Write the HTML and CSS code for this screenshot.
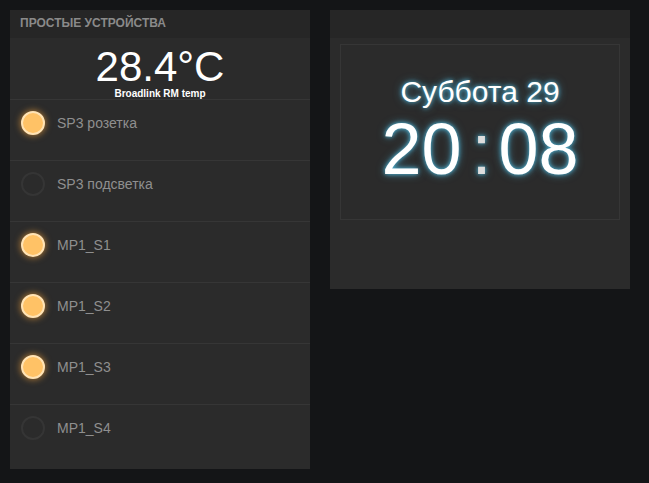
FILE: index.html
```html
<!DOCTYPE html>
<html lang="ru">
<head>
    <meta charset="UTF-8">
    <meta name="viewport" content="width=device-width, initial-scale=1.0">
    <link rel="stylesheet" href="styles.css">
    <title>Dashboard</title>
</head>
<body>
    <div class="board">
        <div class="panel devices">
            <div class="panel-title">Простые устройства</div>
            <div class="temp">
                <div class="temp-value">28.4°C</div>
                <div class="temp-name">Broadlink RM temp</div>
            </div>
            <div class="row"><span class="lamp on"></span><span class="label">SP3 розетка</span></div>
            <div class="row"><span class="lamp"></span><span class="label">SP3 подсветка</span></div>
            <div class="row"><span class="lamp on"></span><span class="label">MP1_S1</span></div>
            <div class="row"><span class="lamp on"></span><span class="label">MP1_S2</span></div>
            <div class="row"><span class="lamp on"></span><span class="label">MP1_S3</span></div>
            <div class="row"><span class="lamp"></span><span class="label">MP1_S4</span></div>
        </div>

        <div class="panel clock-panel">
            <div class="panel-title"></div>
            <div class="clock">
                <div class="day">Суббота 29</div>
                <div class="time"><span>20</span><span class="colon">:</span><span>08</span></div>
            </div>
        </div>
    </div>
</body>
</html>
```

FILE: styles.css
```css
body {
    margin: 0;
    background-color: #141517;
    font-family: "Liberation Sans", Arial, sans-serif;
}
.board {
    display: flex;
    align-items: flex-start;
    gap: 20px;
    padding: 10px;
}
.panel {
    width: 300px;
    background-color: #2b2b2b;
}
.panel-title {
    height: 28px;
    line-height: 27px;
    padding-left: 10px;
    background-color: #262626;
    color: #8a8a8a;
    font-size: 12px;
    font-weight: bold;
    text-transform: uppercase;
}
.devices {
    padding-bottom: 4px;
}
.temp {
    height: 61px;
    text-align: center;
    color: #fff;
}
.temp-value {
    font-size: 42px;
    line-height: 38px;
    padding-top: 10px;
}
.temp-name {
    font-size: 10px;
    font-weight: bold;
    line-height: 12px;
    margin-top: 2px;
}
.row {
    display: flex;
    align-items: center;
    height: 60px;
    border-top: 1px solid #363636;
    padding: 0 0 0 11px;
}
.row .lamp,
.row .label {
    margin-top: -14px;
}
.lamp {
    box-sizing: border-box;
    width: 24px;
    height: 24px;
    border-radius: 50%;
    border: 2px solid #353535;
    margin-right: 12px;
}
.lamp.on {
    background-color: #ffc266;
    border-color: #ffe3b5;
    box-shadow: 0 0 6px 1px rgba(255, 170, 60, 0.55);
}
.label {
    color: #8f8f8f;
    font-size: 14px;
}
.clock-panel {
    width: 300px;
    height: 279px;
}
.clock {
    margin: 6px 10px 0 10px;
    height: 174px;
    border: 1px solid #363636;
    text-align: center;
    color: #fff;
    text-shadow: 0 0 4px #4fb6d8, 0 0 8px rgba(80, 190, 230, 0.6);
}
.day {
    font-size: 30px;
    line-height: 34px;
    padding-top: 30px;
}
.time {
    font-size: 72px;
    line-height: 72px;
    margin-top: 4px;
}
.colon {
    margin: 0 7px 0 10px;
    color: #ddd;
}
```
